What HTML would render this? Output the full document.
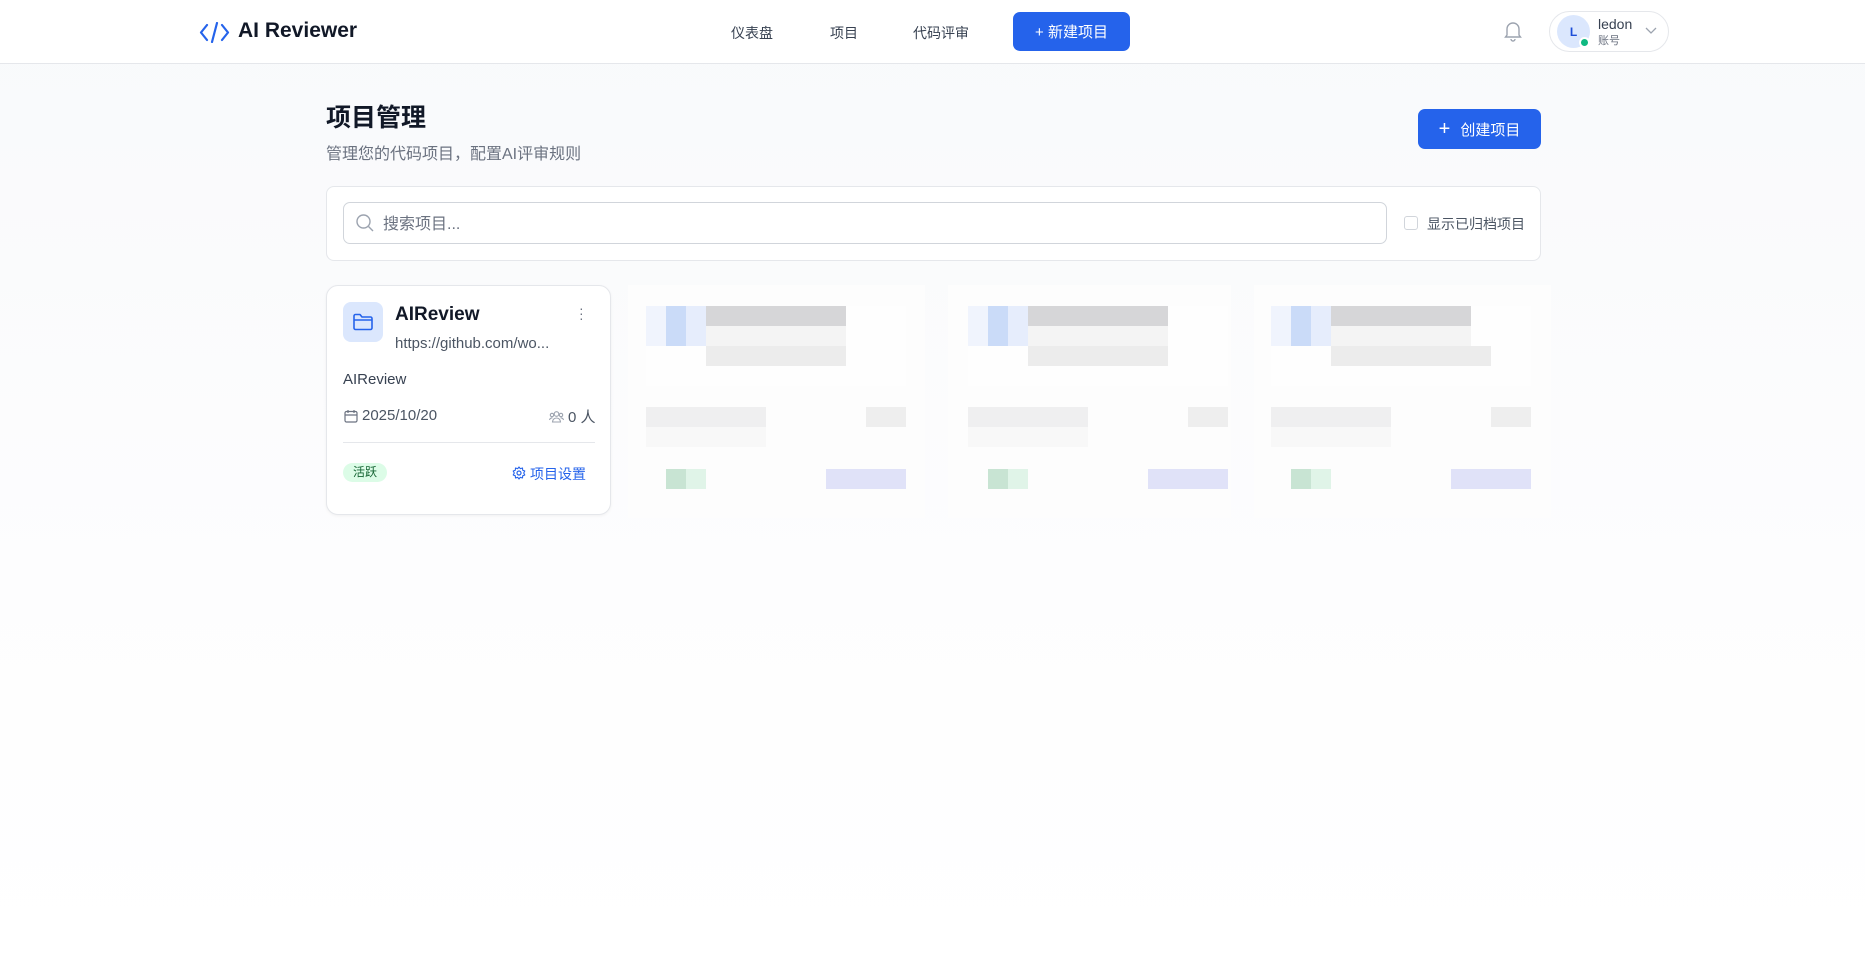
<!DOCTYPE html>
<html><head><meta charset="utf-8"><style>
*{box-sizing:border-box;margin:0;padding:0}
body{width:1865px;height:956px;overflow:hidden;font-family:"Liberation Sans","Noto Sans CJK SC",sans-serif;background:linear-gradient(#f8f9fb,#fdfdfe 60%,#fff);position:relative;color:#111827}
.abs{position:absolute}
.hdr{left:0;top:0;width:1865px;height:64px;background:#fff;border-bottom:1px solid #e5e7eb}
.nav{font-size:14px;color:#374151;top:23px}
.btn{background:#2563eb;color:#fff;border-radius:7px;display:flex;align-items:center;justify-content:center;font-size:15px}
.card{background:#fff;border:1px solid #e5e7eb;border-radius:12px}
.b{position:absolute}
</style></head><body>
<div class="abs hdr"></div>
<svg class="abs" style="left:199px;top:22px" width="31" height="21" viewBox="0 0 31 21"><path d="M8 3 L2 10.5 L8 18 M23 3 L29 10.5 L23 18 M18 1 L13 20" stroke="#2563eb" stroke-width="2.2" fill="none" stroke-linecap="round" stroke-linejoin="round"/></svg>
<div class="abs" style="left:238px;top:19px;font-size:21px;font-weight:bold;color:#111827">AI Reviewer</div>
<div class="abs nav" style="left:731px">仪表盘</div>
<div class="abs nav" style="left:830px">项目</div>
<div class="abs nav" style="left:913px">代码评审</div>
<div class="abs btn" style="left:1013px;top:12px;width:117px;height:39px">+ 新建项目</div>
<svg class="abs" style="left:1503px;top:20px" width="20" height="22" viewBox="0 0 20 22"><path d="M4 15 V9 a6 6 0 0 1 12 0 V15 L17.5 17 H2.5 Z M8 19 a2 2 0 0 0 4 0" stroke="#9ca3af" stroke-width="1.4" fill="none"/></svg>
<div class="abs" style="left:1549px;top:11px;width:120px;height:41px;border:1px solid #e5e7eb;border-radius:21px;background:#fff"></div>
<div class="abs" style="left:1557px;top:15px;width:33px;height:33px;border-radius:50%;background:#dbe7fd;color:#1d4ed8;font-size:12px;font-weight:bold;display:flex;align-items:center;justify-content:center">L</div>
<div class="abs" style="left:1579px;top:37px;width:11px;height:11px;border-radius:50%;background:#10b981;border:2px solid #fff"></div>
<div class="abs" style="left:1598px;top:16px;font-size:14px;color:#374151">ledon</div>
<div class="abs" style="left:1598px;top:32px;font-size:11px;color:#6b7280">账号</div>
<svg class="abs" style="left:1645px;top:27px" width="12" height="8"><path d="M1 1 L6 6 L11 1" stroke="#9ca3af" fill="none" stroke-width="1.3"/></svg>

<div class="abs" style="left:326px;top:98px;font-size:25px;font-weight:bold">项目管理</div>
<div class="abs" style="left:326px;top:140px;font-size:16px;color:#6b7280">管理您的代码项目，配置AI评审规则</div>
<div class="abs btn" style="left:1418px;top:109px;width:123px;height:40px;font-size:15px"><span style="font-size:20px;margin-right:10px;font-weight:300">+</span>创建项目</div>

<div class="abs card" style="left:326px;top:186px;width:1215px;height:75px;border-radius:8px"></div>
<div class="abs" style="left:343px;top:202px;width:1044px;height:42px;border:1px solid #d1d5db;border-radius:7px;background:#fff"></div>
<svg class="abs" style="left:355px;top:213px" width="20" height="20"><circle cx="8.5" cy="8.5" r="6.5" stroke="#9ca3af" stroke-width="1.4" fill="none"/><path d="M13.5 13.5 L18 18" stroke="#9ca3af" stroke-width="1.4"/></svg>
<div class="abs" style="left:383px;top:210px;font-size:16px;color:#6b7280">搜索项目...</div>
<div class="abs" style="left:1404px;top:216px;width:14px;height:14px;border:1px solid #d1d5db;border-radius:3px;background:#fff"></div>
<div class="abs" style="left:1427px;top:214px;font-size:14px;color:#4b5563">显示已归档项目</div>

<div class="abs card" style="left:326px;top:285px;width:285px;height:230px;box-shadow:0 1px 3px rgba(0,0,0,.05)"></div>
<div class="abs" style="left:343px;top:302px;width:40px;height:40px;border-radius:8px;background:#dbe7fd"></div>
<svg class="abs" style="left:352px;top:311px" width="22" height="22" viewBox="0 0 22 22"><path d="M2 5 a1.5 1.5 0 0 1 1.5-1.5 H8 L10 6 H18.5 A1.5 1.5 0 0 1 20 7.5 V17 A1.5 1.5 0 0 1 18.5 18.5 H3.5 A1.5 1.5 0 0 1 2 17 Z M2 9 H20" stroke="#2563eb" stroke-width="1.6" fill="none" stroke-linejoin="round"/></svg>
<div class="abs" style="left:395px;top:304px;font-size:19px;font-weight:bold">AIReview</div>
<div class="abs" style="left:579px;top:306px;width:3px;line-height:5px;color:#6b7280;font-size:14px">·<br>·<br>·</div>
<div class="abs" style="left:395px;top:335px;font-size:15px;color:#4b5563">https://github.com/wo...</div>
<div class="abs" style="left:343px;top:371px;font-size:15px;color:#374151">AIReview</div>
<svg class="abs" style="left:344px;top:409px" width="14" height="14"><rect x="1" y="2.5" width="12" height="10.5" rx="1.5" stroke="#6b7280" fill="none" stroke-width="1.2"/><path d="M1 6 H13 M4 1 V4 M10 1 V4" stroke="#6b7280" stroke-width="1.2"/></svg>
<div class="abs" style="left:362px;top:407px;font-size:15px;color:#4b5563">2025/10/20</div>
<svg class="abs" style="left:549px;top:410px" width="15" height="13"><circle cx="7.5" cy="4" r="2.3" stroke="#9ca3af" fill="none" stroke-width="1.1"/><circle cx="3" cy="5" r="1.7" stroke="#9ca3af" fill="none" stroke-width="1.1"/><circle cx="12" cy="5" r="1.7" stroke="#9ca3af" fill="none" stroke-width="1.1"/><path d="M3.5 12 a4 4 0 0 1 8 0 Z M0.5 10 a2.5 2.5 0 0 1 3-2 M14.5 10 a2.5 2.5 0 0 0 -3-2" stroke="#9ca3af" fill="none" stroke-width="1.1"/></svg>
<div class="abs" style="left:568px;top:406px;font-size:15px;color:#4b5563">0 人</div>
<div class="abs" style="left:343px;top:442px;width:252px;height:1px;background:#e5e7eb"></div>
<div class="abs" style="left:343px;top:463px;width:44px;height:19px;border-radius:10px;background:#dcfce7;color:#166534;font-size:12px;text-align:center;line-height:19px">活跃</div>
<svg class="abs" style="left:512px;top:466px" width="14" height="14" viewBox="0 0 14 14"><circle cx="7" cy="7" r="2" stroke="#2563eb" fill="none" stroke-width="1.2"/><path d="M7 1 L8.3 2.7 L10.5 2 L10.7 4.2 L12.8 5 L11.7 7 L12.8 9 L10.7 9.8 L10.5 12 L8.3 11.3 L7 13 L5.7 11.3 L3.5 12 L3.3 9.8 L1.2 9 L2.3 7 L1.2 5 L3.3 4.2 L3.5 2 L5.7 2.7 Z" stroke="#2563eb" fill="none" stroke-width="1.1" stroke-linejoin="round"/></svg>
<div class="abs" style="left:530px;top:464px;font-size:14px;color:#2563eb">项目设置</div>

<div class="abs" style="left:628px;top:285px;width:297px;height:233px;background:#fdfdfd"></div>
<div class="abs" style="left:948px;top:285px;width:283px;height:233px;background:#fdfdfd"></div>
<div class="abs" style="left:1254px;top:285px;width:297px;height:233px;background:#fdfdfd"></div>
<div id="ph"></div>
<script>
var offs=[0,322,625],h='';
offs.forEach(function(o,i){
 var x=646+o;
 h+='<div class="b" style="left:'+(x)+'px;top:306px;width:260px;height:80px;background:#fefefe"></div>';
 h+='<div class="b" style="left:'+(x)+'px;top:306px;width:20px;height:40px;background:#f0f4fd"></div>';
 h+='<div class="b" style="left:'+(x+20)+'px;top:306px;width:20px;height:40px;background:#cadbf8"></div>';
 h+='<div class="b" style="left:'+(x+40)+'px;top:306px;width:20px;height:40px;background:#e6edfc"></div>';
 h+='<div class="b" style="left:'+(x+60)+'px;top:306px;width:140px;height:20px;background:#d6d6d8"></div>';
 h+='<div class="b" style="left:'+(x+60)+'px;top:326px;width:140px;height:20px;background:#f4f4f4"></div>';
 h+='<div class="b" style="left:'+(x+60)+'px;top:346px;width:'+(i==2?160:140)+'px;height:20px;background:#ececec"></div>';
 h+='<div class="b" style="left:'+(x)+'px;top:407px;width:120px;height:20px;background:#efeff0"></div>';
 h+='<div class="b" style="left:'+(x)+'px;top:427px;width:120px;height:20px;background:#f8f8f8"></div>';
 h+='<div class="b" style="left:'+(x+220)+'px;top:407px;width:40px;height:20px;background:#eeeeee"></div>';
 h+='<div class="b" style="left:'+(x+20)+'px;top:469px;width:20px;height:20px;background:#c8e4d3"></div>';
 h+='<div class="b" style="left:'+(x+40)+'px;top:469px;width:20px;height:20px;background:#e0f4e8"></div>';
 h+='<div class="b" style="left:'+(x+180)+'px;top:469px;width:80px;height:20px;background:#e0e2f8"></div>';
});
document.getElementById('ph').innerHTML=h;
</script>
</body></html>
